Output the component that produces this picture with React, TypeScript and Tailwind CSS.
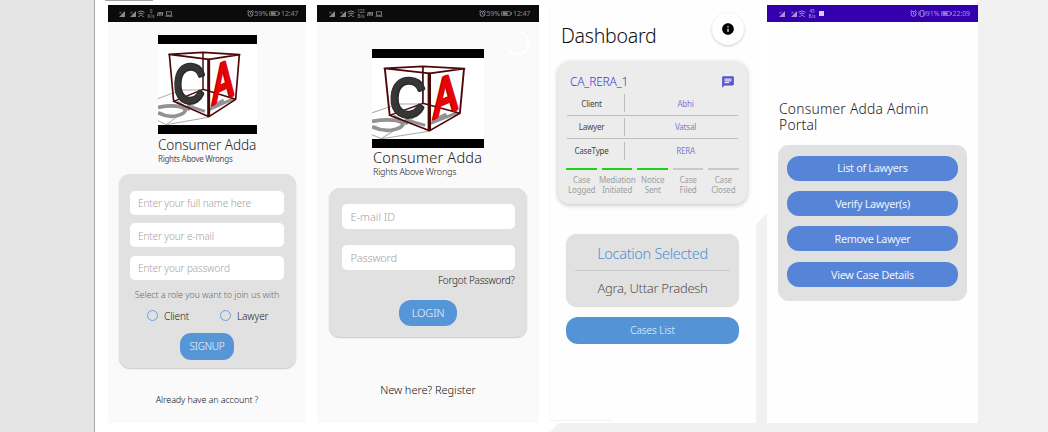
import type { ReactNode } from "react";
import { MdChat, MdInfo } from "react-icons/md";

function Signal() {
  return (
    <svg viewBox="0 0 7 7" className="h-[6px] w-[6px] shrink-0">
      <path d="M0 7 L7 0 V7 Z" fill="currentColor" />
      <path d="M0.5 1 L3 3 M3 0.6 L0.6 3.2" stroke="currentColor" strokeWidth="0.7" />
    </svg>
  );
}

function Wifi() {
  return (
    <svg viewBox="0 0 8 7" className="ml-px h-[7px] w-[8px] shrink-0" fill="none" stroke="currentColor">
      <path d="M0.5 2.4 Q4 -0.6 7.5 2.4 M1.6 4.1 Q4 2 6.4 4.1 M2.8 5.6 Q4 4.6 5.2 5.6" strokeWidth="1" />
      <path d="M0.8 6.4 H3 M5 6.4 H7.2" strokeWidth="0.7" />
    </svg>
  );
}

function Alarm() {
  return (
    <svg viewBox="0 0 7 7" className="h-[7px] w-[7px] shrink-0" fill="none" stroke="currentColor" strokeWidth="1">
      <circle cx="3.5" cy="3.8" r="2.5" />
      <path d="M3.5 2.5 V4 L4.5 4.6 M0.3 1.5 L1.8 0.3 M6.7 1.5 L5.2 0.3" />
    </svg>
  );
}

function Battery() {
  return (
    <svg viewBox="0 0 11 5" className="h-[5px] w-[11px] shrink-0">
      <rect x="0.4" y="0.4" width="9" height="4.2" rx="0.8" fill="none" stroke="currentColor" strokeWidth="0.8" />
      <rect x="1.6" y="1.3" width="5" height="2.4" fill="currentColor" />
      <path d="M10.6 1.2 V3.8" stroke="currentColor" strokeWidth="0.8" />
    </svg>
  );
}

function Vibrate() {
  return (
    <svg viewBox="0 0 8 7" className="h-[7px] w-[8px] shrink-0" fill="none" stroke="currentColor" strokeWidth="0.9">
      <rect x="2.2" y="0.6" width="3.6" height="5.8" rx="0.6" />
      <path d="M1 1.5 V5.5 M7 1.5 V5.5" />
    </svg>
  );
}

function NetSpeed({ value, unit }: { value: string; unit: string }) {
  return (
    <span className="flex w-[8px] flex-col items-center text-[4.5px] leading-[5px] font-medium">
      <span>{value}</span>
      <span>{unit}</span>
    </span>
  );
}

function StatusBar({ className, left, right }: { className: string; left: ReactNode; right: ReactNode }) {
  return (
    <header className={"flex h-[16.5px] shrink-0 items-center justify-between pt-[1px] font-normal " + className}>
      <div className="flex items-center">{left}</div>
      <div className="flex items-center">{right}</div>
    </header>
  );
}

function DarkStatus({ speed, unit, pad }: { speed: string; unit: string; pad: string }) {
  return (
    <StatusBar
      className={"bg-[#0b0b0b] text-[#8b8b8b] " + pad}
      left={
        <>
          <Signal />
          <span className="w-[5px]" />
          <Signal />
          <Wifi />
          <span className="w-[2px]" />
          <NetSpeed value={speed} unit={unit} />
          <svg viewBox="0 0 16 6" className="ml-[2px] h-[6px] w-[16px]" fill="none" stroke="currentColor">
            <path d="M0.6 5 L1.2 1.8 H5.6 L5 5 M3.2 1.8 L2.8 5" strokeWidth="1.2" />
            <rect x="9.5" y="0.8" width="5" height="3.4" strokeWidth="0.8" />
            <path d="M8.5 5.2 H15.6" strokeWidth="0.9" />
          </svg>
        </>
      }
      right={
        <>
          <Alarm />
          <span className="text-[7px] leading-none">59%</span>
          <span className="w-[1px]" />
          <Battery />
          <span className="ml-[1px] text-[7px] leading-none tracking-[-0.2px]">12:47</span>
        </>
      }
    />
  );
}

function Logo({ className }: { className: string }) {
  return (
    <svg viewBox="9 15 297 297" preserveAspectRatio="none" className={"shrink-0 " + className}>
      <rect x="9" y="15" width="297" height="297" fill="#fff" />
      <g fill="none" stroke="#929292">
        <path d="M9 206 L78 180 L145 180 M9 272 L34 284 L160 262 M34 284 L118 222" strokeWidth="3" stroke="#aaa" />
        <path d="M9 232 Q66 222 90 236 Q96 250 62 258 Q34 262 9 248" strokeWidth="11" />
        <path d="M66 216 L104 240 M96 226 L150 244 M160 240 L236 206 M168 232 L206 210" strokeWidth="9" />
      </g>
      <g fill="none" stroke="#4c0709" strokeLinejoin="round">
        <path d="M144 68 V178 L56 214 M144 178 L242 208" strokeWidth="4.5" />
        <path d="M42 73 L144 67 L254 74 L162 88 Z" strokeWidth="5" />
        <path d="M43 73 L56 214 L162 260 L242 208 L253 74" strokeWidth="5" />
        <path d="M161 86 V260" strokeWidth="9" />
      </g>
      <g fontFamily="Liberation Sans, sans-serif" fontWeight="400" strokeLinejoin="round" strokeLinecap="round" textAnchor="middle">
        <g transform="translate(100 217) rotate(3) scale(0.8 1)">
          <text fontSize="162" fill="#2b2b2b" stroke="#2b2b2b" strokeWidth="12">C</text>
          <text x="-2" y="-1" fontSize="162" fill="#373737" stroke="#373737" strokeWidth="4">C</text>
        </g>
        <g transform="translate(204 209) skewY(-25) scale(0.58 1)">
          <text x="-4" fontSize="160" fill="#b80000" stroke="#b80000" strokeWidth="10">A</text>
          <text x="2" fontSize="160" fill="#e60505" stroke="#e60505" strokeWidth="9">A</text>
        </g>
      </g>
      <rect x="9" y="15" width="297" height="27" fill="#000" />
      <rect x="9" y="285" width="297" height="27" fill="#000" />
    </svg>
  );
}

function Field({ className, label }: { className: string; label: string }) {
  return (
    <div className={"flex shrink-0 items-center rounded-[5px] bg-white text-[#a2a2a2] " + className}>{label}</div>
  );
}

function Role({ label, className }: { label: string; className: string }) {
  return (
    <span className={"flex items-center gap-[6px] " + className}>
      <span className="h-[11px] w-[11px] rounded-full border-[1.3px] border-[#6a9fdc]" />
      <span className="pt-px">{label}</span>
    </span>
  );
}

function SignupPhone() {
  return (
    <section className="flex h-[418px] w-[198px] flex-col bg-[#fafafa]">
      <DarkStatus speed="0" unit="K/s" pad="pl-[11px] pr-[8px]" />
      <Logo className="mt-[13.5px] ml-[49.5px] h-[99px] w-[99px]" />
      <h1 className="ml-[50px] h-[18px] text-[13.6px] leading-[21px] tracking-[-0.1px] text-[#222]">Consumer Adda</h1>
      <p className="ml-[50px] h-[12px] text-[8px] leading-[13px] font-normal tracking-[-0.3px] text-[#555]">Rights Above Wrongs</p>
      <div className="mt-[9.5px] ml-[10.5px] flex h-[194px] w-[177px] shrink-0 flex-col items-center rounded-[11px] bg-[#e1e1e1] pt-[17px] shadow-[0_1px_1.5px_rgba(0,0,0,0.2)]">
        <div className="flex flex-col gap-[8.5px] text-[10px] tracking-[-0.1px]">
          <Field className="h-[24px] w-[154px] pt-[2px] pl-[8px]" label="Enter your full name here" />
          <Field className="h-[24px] w-[154px] pt-[2px] pl-[8px]" label="Enter your e-mail" />
          <Field className="h-[24px] w-[154px] pt-[2px] pl-[8px]" label="Enter your password" />
        </div>
        <p className="mt-[9.5px] text-[9px] leading-[12px] tracking-[-0.1px] text-[#6c6c6c]">Select a role you want to join us with</p>
        <div className="mt-[7.5px] flex h-[14px] w-full items-center pl-[28.5px] text-[10px] tracking-[-0.1px] text-[#222]">
          <Role label="Client" className="w-[73px]" />
          <Role label="Lawyer" className="" />
        </div>
        <button className="mt-[10px] h-[27px] w-[54px] rounded-[11px] bg-[#5796d6] pt-px text-[10px] tracking-[-0.2px] text-[#eef7ff]">SIGNUP</button>
      </div>
      <p className="mt-[25px] text-center text-[9px] leading-[13px] tracking-[-0.12px] text-[#111]">Already have an account ?</p>
    </section>
  );
}

function LoginPhone() {
  return (
    <section className="relative ml-[11px] flex h-[418px] w-[222px] flex-col bg-[#fafafa]">
      <DarkStatus speed="122" unit="B/s" pad="pl-[12px] pr-[9px]" />
      <svg viewBox="0 0 26 26" className="absolute top-[25px] left-[188px] h-[26px] w-[26px]">
        <path d="M13 2 A11 11 0 1 1 4 20" fill="none" stroke="#fff" strokeWidth="2.2" />
      </svg>
      <Logo className="mt-[27.5px] ml-[55px] h-[99px] w-[112px]" />
      <h1 className="ml-[56px] h-[18px] text-[14.5px] leading-[19px] tracking-[0.25px] text-[#222]">Consumer Adda</h1>
      <p className="ml-[56px] h-[12px] text-[9px] leading-[12px] tracking-[-0.2px] text-[#222]">Rights Above Wrongs</p>
      <div className="mt-[10px] ml-[12px] flex h-[149px] w-[198px] shrink-0 flex-col items-center rounded-[11px] bg-[#e1e1e1] pt-[16px] shadow-[0_1px_1.5px_rgba(0,0,0,0.2)]">
        <Field className="h-[25px] w-[173px] pt-px pl-[9px] text-[11px]" label="E-mail ID" />
        <Field className="mt-[16px] h-[25px] w-[173px] pt-px pl-[9px] text-[11px] tracking-[-0.2px]" label="Password" />
        <p className="mt-[4px] w-[173px] text-right text-[10px] leading-[13px] tracking-[-0.25px] text-[#222]">Forgot Password?</p>
        <button className="mt-[13px] h-[26px] w-[58px] rounded-[12px] bg-[#5796d6] text-[11px] tracking-[-0.15px] text-[#eef7ff]">LOGIN</button>
      </div>
      <p className="mt-[44.5px] text-center text-[11px] leading-[15px] tracking-[-0.04px] text-[#111]">New here? Register</p>
    </section>
  );
}

const CASE_ROWS = [
  ["Client", "Abhi"],
  ["Lawyer", "Vatsal"],
  ["CaseType", "RERA"],
];

const CASE_STEPS = [
  { first: "Case", second: "Logged", done: true },
  { first: "Mediation", second: "Initiated", done: true },
  { first: "Notice", second: "Sent", done: true },
  { first: "Case", second: "Filed", done: false },
  { first: "Case", second: "Closed", done: false },
];

function DashboardPhone() {
  return (
    <section className="ml-[10px] flex h-[418px] w-[207px] flex-col border-l border-[#fafafa] bg-[#fefefe]">
      <div className="flex h-[57px] shrink-0 items-start justify-between pt-[8px] pr-[11px] pl-[11px]">
        <h1 className="mt-[8px] text-[19.5px] leading-[30px] tracking-[-0.25px] text-[#111]">Dashboard</h1>
        <span className="mr-px flex h-[32px] w-[32px] items-center justify-center rounded-full bg-white shadow-[0_1px_3px_rgba(0,0,0,0.2)]">
          <MdInfo className="h-[14px] w-[14px] text-black" />
        </span>
      </div>
      <div className="ml-[8px] flex h-[142px] w-[189px] shrink-0 flex-col rounded-[12px] bg-[#ececec] px-[9px] pt-[10px] shadow-[0_1px_5px_rgba(0,0,0,0.25)]">
        <div className="flex h-[20px] items-center justify-between pr-[3px] pl-[3px] text-[12px] tracking-[-0.2px] text-[#4038cf]">
          <span>CA_RERA_1</span>
          <MdChat className="mb-px h-[14px] w-[14px] text-[#5750d4]" />
        </div>
        <div className="flex flex-col text-[8px] font-normal tracking-[-0.2px]">
          {CASE_ROWS.map(([name, value]) => (
            <div key={name} className="flex h-[23.5px] items-center border-b border-[#bdbdbd] last:border-0">
              <span className="w-[49px] pt-px text-center text-[#444]">{name}</span>
              <span className="ml-[8px] h-[18px] w-px bg-[#bdbdbd]" />
              <span className="flex-1 pt-px pl-[8px] text-center text-[#7f78d3]">{value}</span>
            </div>
          ))}
        </div>
        <div className="mx-[-3px] mt-[5px] flex text-center text-[8px] leading-[9.5px] font-normal tracking-[-0.15px] text-[#a0a0a0]">
          {CASE_STEPS.map((step, i) => (
            <div key={i} className="flex w-[35.8px] flex-col items-center">
              <span className={"mb-[5px] h-[2.5px] w-[30.5px] " + (step.done ? "bg-[#1fd01b]" : "bg-[#c8c8c8]")} />
              <span>{step.first}</span>
              <span>{step.second}</span>
            </div>
          ))}
        </div>
      </div>
      <div className="mt-[30px] ml-[16px] flex h-[72px] w-[173px] shrink-0 flex-col items-center rounded-[11px] bg-[#e1e1e1] shadow-[0_0.5px_1px_rgba(0,0,0,0.15)]">
        <span className="flex h-[37.5px] w-[155px] items-center justify-center border-b-[1.5px] border-[#cbcbcb] pt-[3px] text-[14.5px] tracking-[-0.3px] text-[#4f90d8]">Location Selected</span>
        <span className="flex h-[35px] items-center pt-px text-[13px] tracking-[-0.3px] text-[#555]">Agra, Uttar Pradesh</span>
      </div>
      <button className="mt-[10.5px] ml-[16px] h-[27px] w-[173px] shrink-0 rounded-[12px] bg-[#5494d6] pt-px text-[10px] text-[#eef7ff]">Cases List</button>
      <div className="mt-auto mb-[2px] h-[1.5px] w-[62px] bg-[#f3f3f3]" />
    </section>
  );
}

const ADMIN_ACTIONS = ["List of Lawyers", "Verify Lawyer(s)", "Remove Lawyer", "View Case Details"];

function AdminPhone() {
  return (
    <section className="ml-[11px] flex h-[418px] w-[211px] flex-col bg-[#fefefe]">
      <StatusBar
        className="bg-[#3400ad] pr-[8px] pl-[12px] text-[#a791df]"
        left={
          <>
            <Signal />
            <span className="w-[6px]" />
            <Signal />
            <Wifi />
            <span className="w-[2px]" />
            <NetSpeed value="45" unit="B/s" />
            <span className="ml-[3px] h-[5px] w-[5px] bg-[#d8cdf3]" />
          </>
        }
        right={
          <>
            <Alarm />
            <span className="w-[1px]" />
            <Vibrate />
            <span className="text-[7px] leading-none">91%</span>
            <span className="w-[1px]" />
            <Battery />
            <span className="ml-[1px] text-[7px] leading-none tracking-[-0.1px]">22:09</span>
          </>
        }
      />
      <h1 className="mt-[79.5px] ml-[12px] text-[13.8px] leading-[16px] tracking-[0.25px] text-[#222]">
        Consumer Adda Admin
        <br />
        Portal
      </h1>
      <div className="mt-[11.5px] ml-[11px] flex h-[156px] w-[189px] shrink-0 flex-col items-center gap-[10.4px] rounded-[11px] bg-[#e1e1e1] pt-[11px]">
        {ADMIN_ACTIONS.map((label) => (
          <button key={label} className="h-[25px] w-[170.5px] shrink-0 rounded-[12px] bg-[#5684d7] pt-px text-[10.8px] font-normal tracking-[-0.3px] text-[#eef3fc]">
            {label}
          </button>
        ))}
      </div>
    </section>
  );
}

export default function App() {
  return (
    <div className="relative flex h-[432px] w-[1048px] overflow-hidden bg-white font-['Noto_Sans',sans-serif] font-light whitespace-nowrap">
      <svg viewBox="0 0 1048 432" className="absolute inset-0 h-[432px] w-[1048px]">
        <path d="M979 0 L550 432 H1048 V0 Z" fill="#f1f1f1" />
        <path d="M105 0 H153" stroke="#858585" strokeWidth="1.4" />
      </svg>
      <aside className="w-[95px] shrink-0 border-r border-[#a9a9a9] bg-[#e4e4e4]" />
      <main className="relative flex pt-[5px] pl-[13px]">
        <SignupPhone />
        <LoginPhone />
        <DashboardPhone />
        <AdminPhone />
      </main>
    </div>
  );
}
